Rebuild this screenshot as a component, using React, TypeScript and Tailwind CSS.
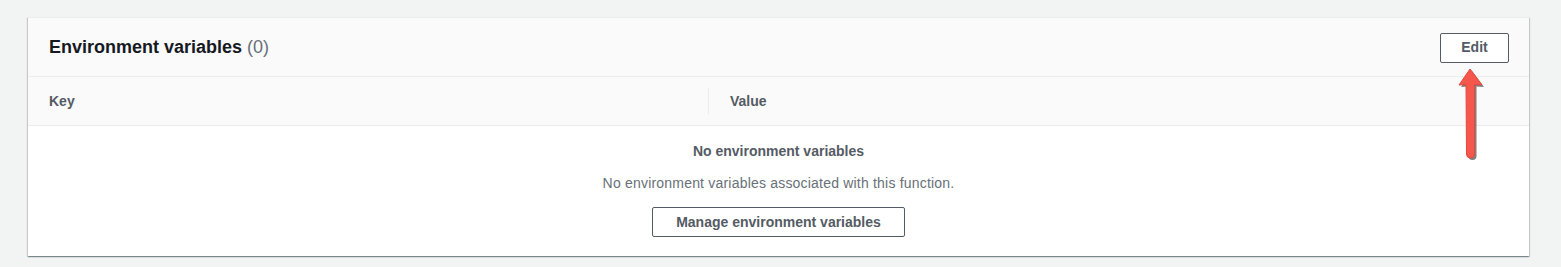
export default function App() {
    return <div className="w-[1561px] h-[267px] bg-[#f2f3f3] pt-[17px] pl-[28px] relative" style={{ fontFamily: '"Liberation Sans", Arial, sans-serif' }}>
        <div className="w-[1501px] bg-white shadow-[0_1px_1px_0_rgba(0,28,36,0.3),1px_1px_1px_0_rgba(0,28,36,0.15),-1px_1px_1px_0_rgba(0,28,36,0.15)] border-t border-[#eaeded]">
            {/* header */}
            <div className="h-[59px] bg-[#fafafa] border-b border-[#eaeded] flex items-center justify-between pl-[21px] pr-[20px]">
                <h2 className="text-[18px] font-bold text-[#16191f] leading-none">
                    Environment variables <span className="font-normal text-[#687078]">(0)</span>
                </h2>
                <button className="w-[69px] h-[30px] border border-[#545b64] rounded-[2px] bg-white text-[14px] font-bold text-[#545b64] mt-[1px]">
                    Edit
                </button>
            </div>
            {/* table head */}
            <div className="h-[49px] bg-[#fafafa] border-b border-[#eaeded] flex items-center text-[14px] font-bold text-[#545b64]">
                <div className="w-[681px] pl-[21px] flex items-center justify-between">
                    <span>Key</span>
                    <span className="w-px h-[26px] bg-[#eaeded]" />
                </div>
                <div className="pl-[21px]">Value</div>
            </div>
            {/* empty state */}
            <div className="h-[130px] flex flex-col items-center pt-[15px]">
                <div className="text-[14px] font-bold text-[#545b64]">No environment variables</div>
                <div className="text-[14px] text-[#687078] mt-[11px] tracking-[0.2px]">No environment variables associated with this function.</div>
                <button className="mt-[13px] w-[253px] h-[30px] border border-[#545b64] rounded-[2px] bg-white text-[14px] font-bold text-[#545b64]">
                    Manage environment variables
                </button>
            </div>
        </div>
        {/* annotation arrow */}
        <svg className="absolute left-[1455px] top-[66px]" width="36" height="100" viewBox="0 0 36 100">
            <path transform="translate(2,2)" d="M15 3 L27 19 L19.5 18.5 L19.5 88 Q19.5 92 15.5 92 Q11.5 92 11.5 88 L11 18.5 L4 19 Z" fill="#2b2b2b" opacity="0.6" />
            <path d="M15 3 L27 19 L19.5 18.5 L19.5 88 Q19.5 92 15.5 92 Q11.5 92 11.5 88 L11 18.5 L4 19 Z" fill="#f5574c" stroke="#e8473d" strokeWidth="1" strokeLinejoin="round" />
        </svg>
    </div>
}
